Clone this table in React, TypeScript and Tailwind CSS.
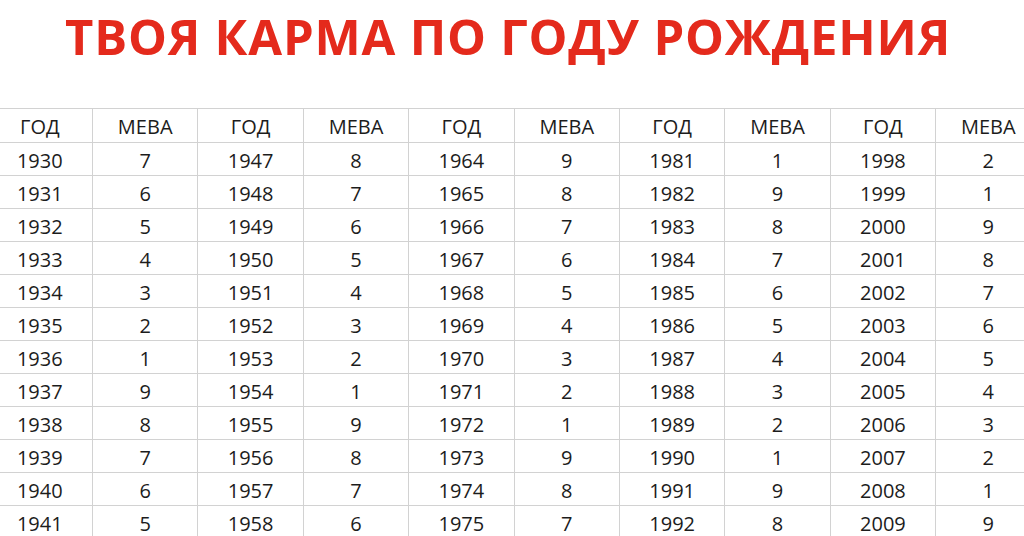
import React from "react";

const starts = [1930, 1947, 1964, 1981, 1998];
const karma: number[][] = [
  [7, 6, 5, 4, 3, 2, 1, 9, 8, 7, 6, 5],
  [8, 7, 6, 5, 4, 3, 2, 1, 9, 8, 7, 6],
  [9, 8, 7, 6, 5, 4, 3, 2, 1, 9, 8, 7],
  [1, 9, 8, 7, 6, 5, 4, 3, 2, 1, 9, 8],
  [2, 1, 9, 8, 7, 6, 5, 4, 3, 2, 1, 9],
];

export default function App() {
  const rows = Array.from({ length: 12 }, (_, r) => r);
  return (
    <div
      className="w-[1024px] h-[536px] overflow-hidden bg-white"
      style={{ fontFamily: '"Open Sans", "Noto Sans", sans-serif' }}
    >
      <div className="h-[108px] pl-[65px] pt-[3px]">
        <h1 className="whitespace-nowrap text-[49px] font-bold leading-[66px] tracking-[0.8px] text-[#e42a1c]">
          ТВОЯ КАРМА ПО ГОДУ РОЖДЕНИЯ
        </h1>
      </div>
      <div className="ml-[-12.4px] grid w-[1054px] grid-cols-[repeat(10,105.4px)] border-t border-[#d2d2d2] text-[20px] font-medium text-[#1c1c1c]">
        {starts.map((s) => (
          <React.Fragment key={"h" + s}>
            <div className="flex h-[34px] items-center justify-center border-r border-b border-[#d2d2d2] pt-[3px]">ГОД</div>
            <div className="flex h-[34px] items-center justify-center border-r border-b border-[#d2d2d2] pt-[3px]">МЕВА</div>
          </React.Fragment>
        ))}
        {rows.map((r) =>
          starts.map((s, c) => (
            <React.Fragment key={r + "-" + s}>
              <div className="flex h-[33px] items-center justify-center border-r border-b border-[#d2d2d2] pt-[3px]">{s + r}</div>
              <div className="flex h-[33px] items-center justify-center border-r border-b border-[#d2d2d2] pt-[3px]">{karma[c][r]}</div>
            </React.Fragment>
          ))
        )}
      </div>
    </div>
  );
}
